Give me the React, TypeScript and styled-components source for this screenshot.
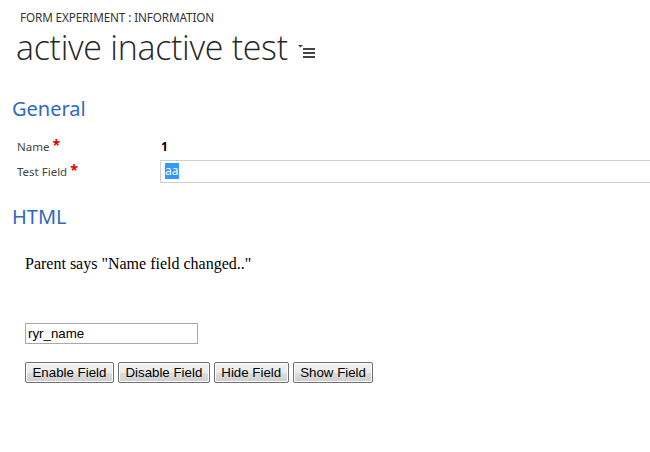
import React from "react";
import styled, { createGlobalStyle } from "styled-components";

const Global = createGlobalStyle`
  html, body { margin: 0; padding: 0; background: #fff; }
  body { font-family: "Noto Sans", "Open Sans", sans-serif; }
  * { box-sizing: border-box; }
`;

const Page = styled.div`
  width: 650px;
  height: 452px;
  overflow: hidden;
  display: flex;
  flex-direction: column;
`;

const Header = styled.header`
  display: flex;
  flex-direction: column;
  padding: 9px 0 0 16px;
`;

const Breadcrumb = styled.div`
  font-family: "Noto Sans", sans-serif;
  font-size: 11.7px;
  color: #333;
  padding-left: 4px;
  line-height: 16px;
  letter-spacing: -0.1px;
`;

const TitleRow = styled.div`
  display: flex;
  align-items: flex-end;
  gap: 10px;
  margin-top: 1px;
`;

const Title = styled.h1`
  margin: 0;
  font-family: "Open Sans", sans-serif;
  font-weight: 300;
  font-size: 34px;
  line-height: 42px;
  color: #262626;
  letter-spacing: -0.3px;
`;

const MenuIcon = styled.svg`
  width: 18px;
  height: 14px;
  margin-bottom: 10px;
`;

const Section = styled.section`
  display: flex;
  flex-direction: column;
  padding-left: 12px;
`;

const SectionTitle = styled.h2<{ $top: number }>`
  margin: ${(p) => p.$top}px 0 0 0;
  font-family: "Noto Sans", sans-serif;
  font-weight: 400;
  font-size: 20px;
  line-height: 24px;
  color: #3068c6;
`;

const Fields = styled.div`
  display: flex;
  flex-direction: column;
  margin-top: 13px;
  gap: 1px;
`;

const FieldRow = styled.div`
  display: grid;
  grid-template-columns: 148px 1fr;
  align-items: center;
  height: 24px;
`;

const Label = styled.div`
  font-family: "Noto Sans", sans-serif;
  font-size: 11.5px;
  color: #444;
  padding-left: 5px;
  display: flex;
  align-items: flex-start;
`;

const Required = styled.span`
  color: #e00000;
  font-size: 14px;
  line-height: 10px;
  margin-left: 3px;
  margin-top: 1px;
  font-weight: 700;
`;

const Value = styled.div`
  font-family: "Noto Sans", sans-serif;
  font-size: 12px;
  font-weight: 700;
  color: #000;
  padding-left: 1px;
`;

const TextBox = styled.div`
  height: 23px;
  border: 1px solid #cfcfcf;
  border-right: none;
  display: flex;
  align-items: center;
  padding-left: 4px;
`;

const Selected = styled.span`
  background: #3399ff;
  color: #fff;
  font-family: "Noto Sans", sans-serif;
  font-size: 12px;
  line-height: 16px;
  padding: 0 1px 0 0;
`;

const HtmlBody = styled.div`
  display: flex;
  flex-direction: column;
  padding-left: 25px;
  margin-top: 26px;
`;

const Message = styled.p`
  margin: 0;
  font-family: "Liberation Serif", serif;
  font-size: 16px;
  line-height: 18px;
  color: #000;
`;

const NameInput = styled.input`
  margin-top: 50px;
  width: 173px;
  height: 21px;
  border: 1px solid #a9a9a9;
  padding: 0 2px;
  font-family: "Liberation Sans", Arial, sans-serif;
  font-size: 13.3px;
  color: #000;
  outline: none;
`;

const ButtonRow = styled.div`
  display: flex;
  gap: 4px;
  margin-top: 18px;
`;

const Button = styled.button`
  height: 21px;
  padding: 0 6.5px;
  font-family: "Liberation Sans", Arial, sans-serif;
  font-size: 13.3px;
  color: #000;
  border: 1px solid #707070;
  border-radius: 2px;
  background: linear-gradient(#f2f2f2 0%, #ebebeb 50%, #dddddd 51%, #cfcfcf 100%);
  box-shadow: inset 0 0 0 1px #fcfcfc;
`;

export default function App() {
  return (
    <Page>
      <Global />
      <Header>
        <Breadcrumb>FORM EXPERIMENT : INFORMATION</Breadcrumb>
        <TitleRow>
          <Title>active inactive test</Title>
          <MenuIcon viewBox="0 0 18 14">
            <polygon points="0,1 5,1 2.5,3.5" fill="#444" />
            <rect x="5" y="4" width="12" height="2" fill="#444" />
            <rect x="5" y="8" width="12" height="2" fill="#444" />
            <rect x="5" y="12" width="12" height="2" fill="#444" />
          </MenuIcon>
        </TitleRow>
      </Header>

      <Section>
        <SectionTitle $top={29}>General</SectionTitle>
        <Fields>
          <FieldRow>
            <Label>
              Name<Required>*</Required>
            </Label>
            <Value>1</Value>
          </FieldRow>
          <FieldRow>
            <Label>
              Test Field<Required>*</Required>
            </Label>
            <TextBox>
              <Selected>aa</Selected>
            </TextBox>
          </FieldRow>
        </Fields>
        <SectionTitle $top={22}>HTML</SectionTitle>
      </Section>

      <HtmlBody>
        <Message>Parent says "Name field changed.."</Message>
        <NameInput defaultValue="ryr_name" />
        <ButtonRow>
          <Button>Enable Field</Button>
          <Button>Disable Field</Button>
          <Button>Hide Field</Button>
          <Button>Show Field</Button>
        </ButtonRow>
      </HtmlBody>
    </Page>
  );
}
